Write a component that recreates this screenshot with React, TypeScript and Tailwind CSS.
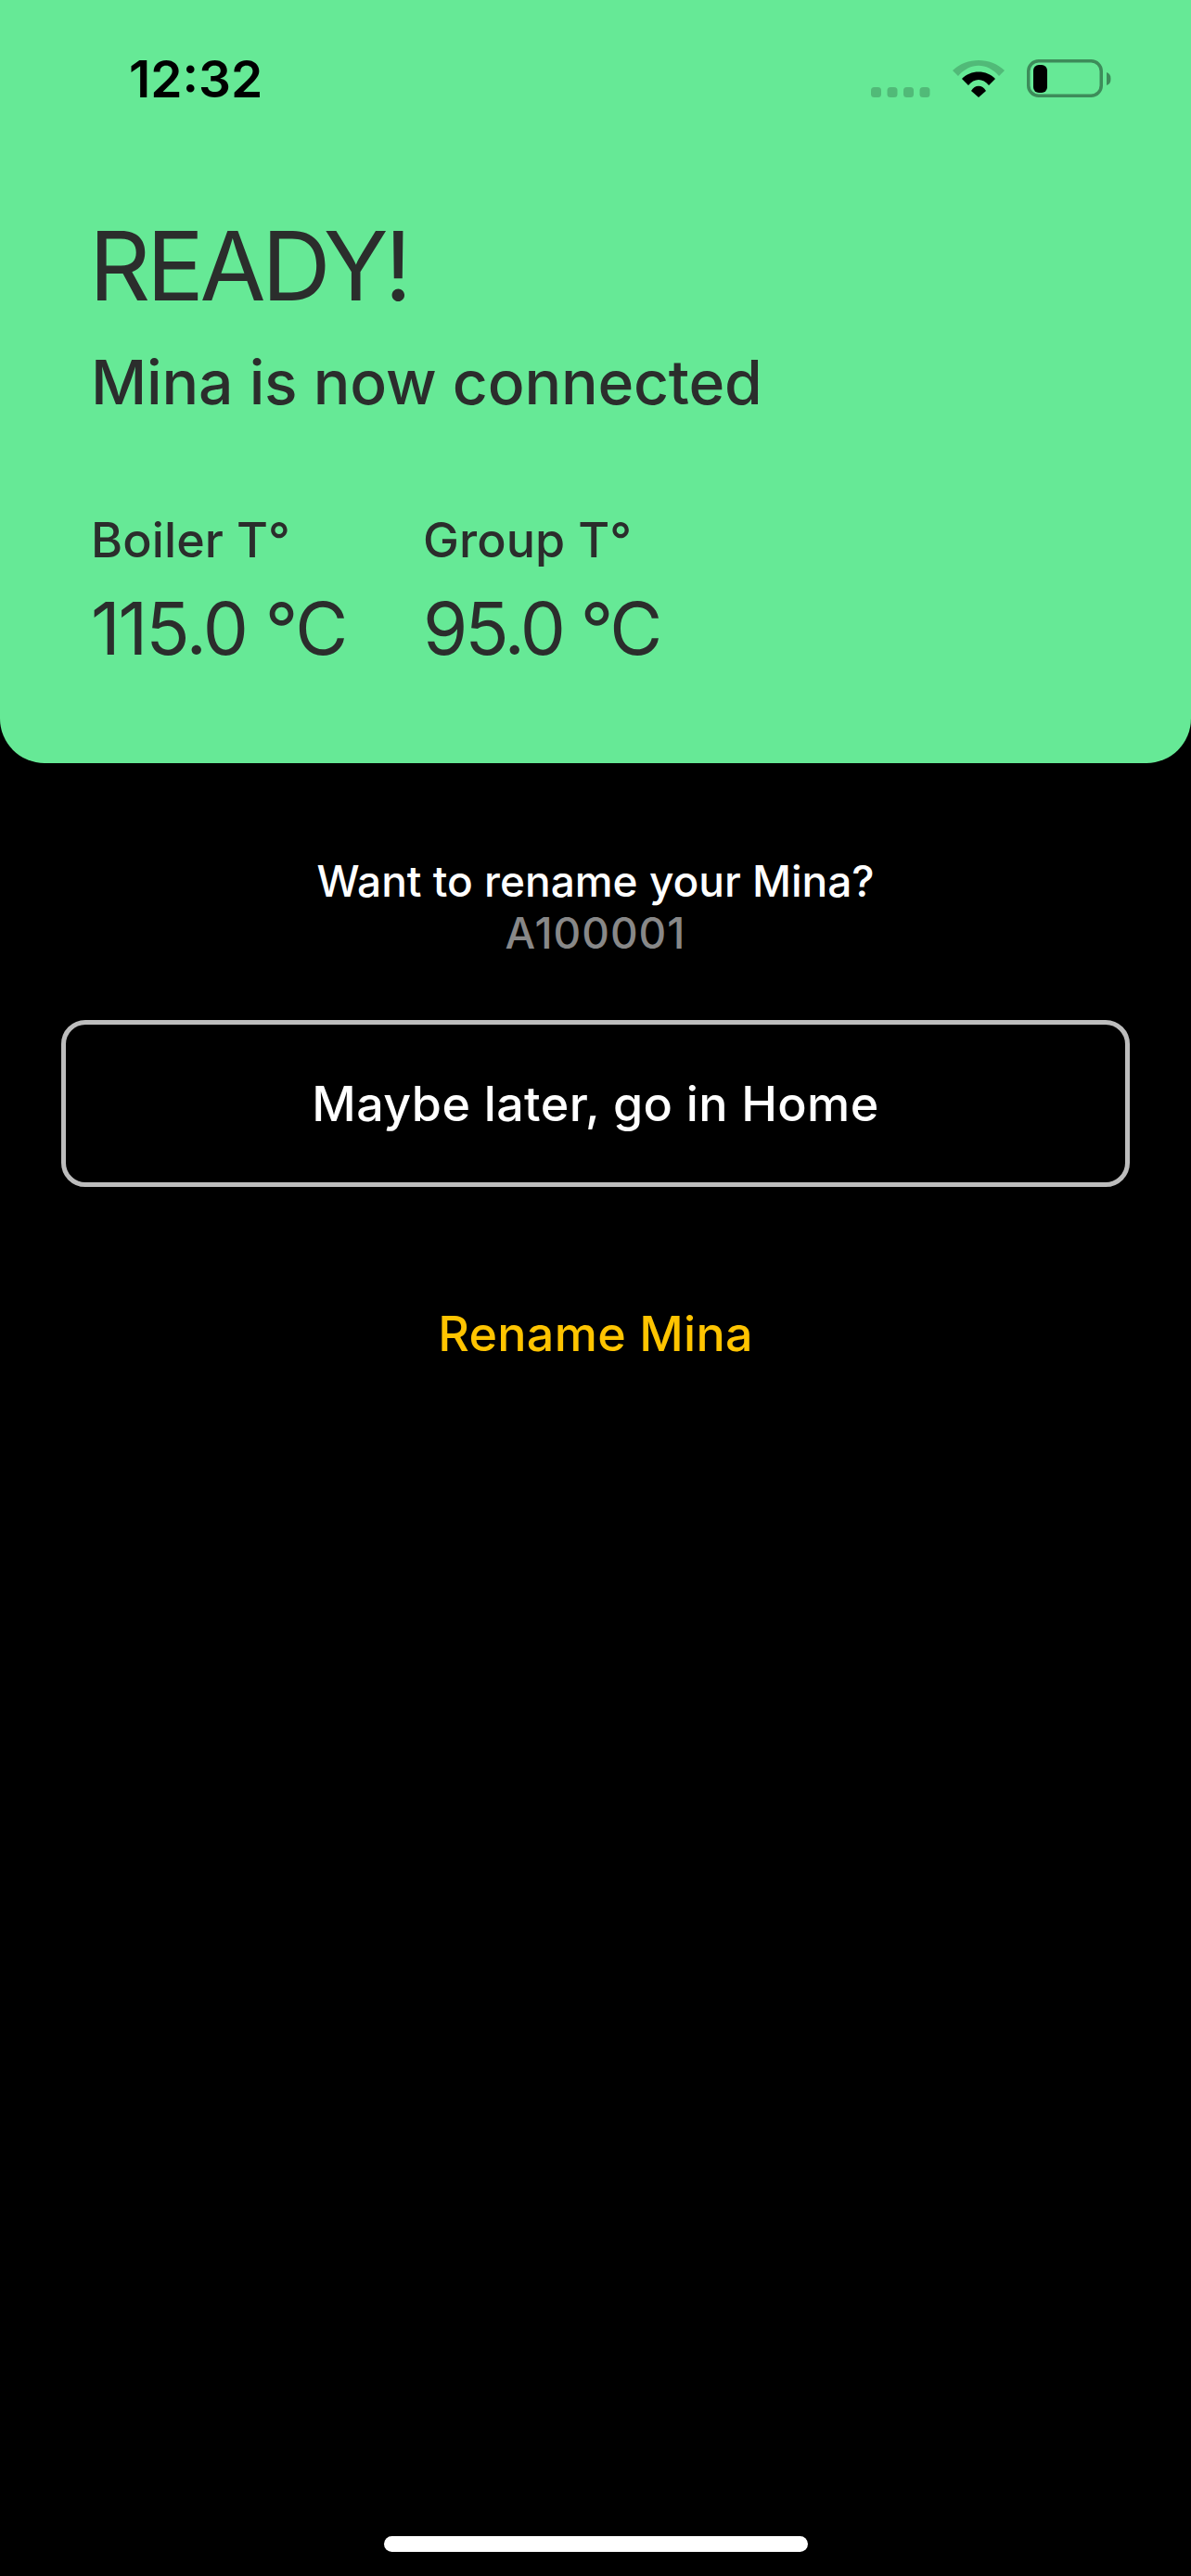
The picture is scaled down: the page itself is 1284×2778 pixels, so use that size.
export default function App() {
  return (
    <div className="relative flex h-[2778px] w-[1284px] flex-col overflow-hidden bg-black font-['Inter',sans-serif]">
      <div className="flex h-[823px] flex-col rounded-b-[48px] bg-[#66e996] text-[#2b2d2c]">
        <div className="flex h-[172px] items-start justify-between pl-[139px] pr-[85px] pt-[52px]">
          <span className="text-[55px] font-semibold leading-[66px] text-black">12:32</span>
          <svg width="260" height="50" viewBox="0 0 260 50" className="mt-[8px]">
            <g fill="#000" fillOpacity="0.2">
              <rect x="0" y="34" width="11" height="11" rx="3.5" />
              <rect x="17.5" y="34" width="11" height="11" rx="3.5" />
              <rect x="35" y="34" width="11" height="11" rx="3.5" />
              <rect x="52.5" y="34" width="11" height="11" rx="3.5" />
              <path d="M88 16 C103 1.3 129 1.3 144 16 L138 22 C125 7 107 7 94 22 Z" />
            </g>
            <path d="M98 25 C107 15 125 15 134 25 L127 32 C121 24 111 24 105 32 Z" />
            <path d="M108 38 C112 31 120 31 124 38 L116 45 Z" />
            <rect x="169.75" y="5.75" width="78.5" height="37.5" rx="11" fill="none" stroke="#000" strokeOpacity="0.4" strokeWidth="3.5" />
            <rect x="175" y="10" width="15" height="30" rx="6" />
            <path d="M254 18 C257 19 258.5 21 258.5 25 C258.5 29 257 31 254 32 Z" fillOpacity="0.4" />
          </svg>
        </div>
        <div className="flex flex-col pl-[98px]">
          <h1 className="mt-[53px] -ml-[2px] text-[103px] font-normal leading-[124px] tracking-[-0.042em]">READY!</h1>
          <p className="mt-[23px] text-[66px] font-[450] leading-[80px] tracking-[-0.003em]">Mina is now connected</p>
          <div className="mt-[99px] flex">
            <div className="flex w-[358px] flex-col">
              <span className="text-[52px] font-[450] leading-[63px] tracking-[0.002em]">Boiler T°</span>
              <span className="mt-[17px] text-[78px] font-normal leading-[94px] tracking-[-0.027em]">115.0 °C</span>
            </div>
            <div className="flex flex-col">
              <span className="text-[52px] font-[450] leading-[63px] tracking-[0.002em]">Group T°</span>
              <span className="mt-[17px] text-[78px] font-normal leading-[94px] tracking-[-0.04em]">95.0 °C</span>
            </div>
          </div>
        </div>
      </div>
      <div className="flex flex-col items-center px-[66px]">
        <p className="mt-[99px] text-[46px] font-[450] leading-[56px] text-white">Want to rename your Mina?</p>
        <p className="text-[46px] font-[450] leading-[56px] tracking-[0.022em] text-[#888888]">A100001</p>
        <button className="mt-[66px] flex h-[180px] w-full items-center justify-center rounded-[26px] border-[5px] border-[#bdbdbd] text-[52px] font-[450] leading-[63px] tracking-[0.008em] text-white">
          Maybe later, go in Home
        </button>
        <button className="mt-[127px] text-[52px] font-[450] leading-[63px] tracking-[0.006em] text-[#ffc400]">Rename Mina</button>
      </div>
      <div className="absolute bottom-[26px] left-[414px] h-[17px] w-[457px] rounded-full bg-white" />
    </div>
  );
}
